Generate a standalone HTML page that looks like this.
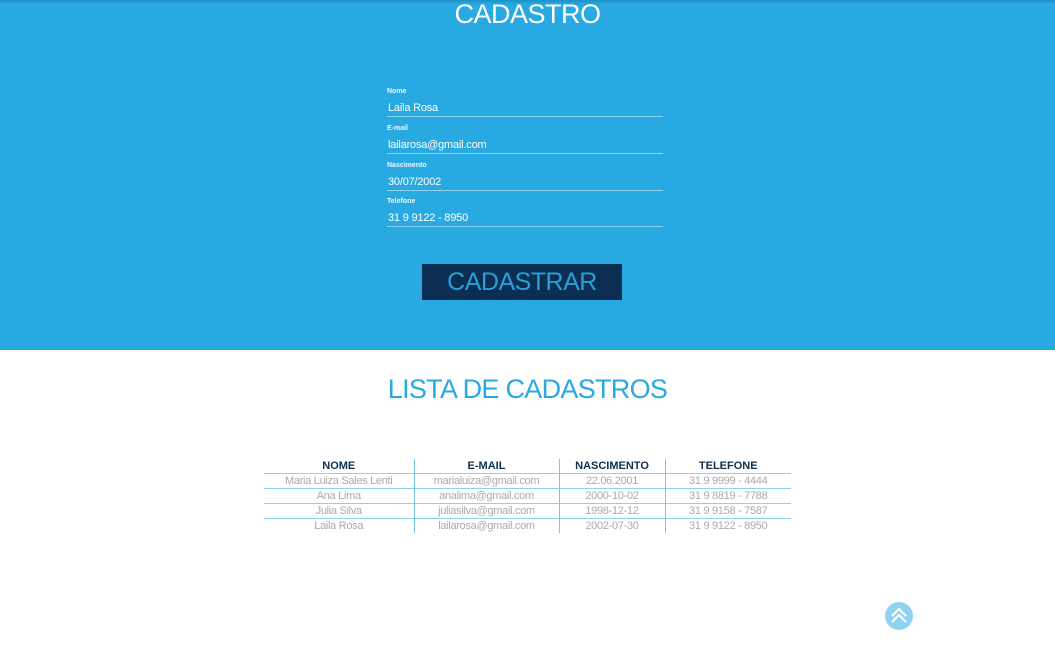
<!DOCTYPE html>
<html><head><style>
*{margin:0;padding:0;box-sizing:border-box}
body{width:1055px;height:656px;overflow:hidden;background:#fff;font-family:"Liberation Sans",sans-serif;position:relative}
.top{position:absolute;left:0;top:0;width:1055px;height:350px;background:#29a9e1}
.shadow{position:absolute;left:0;top:0;width:1055px;height:4px;background:linear-gradient(#1e8fc3,#29a9e1)}
h1{position:absolute;top:-1px;left:0;width:1055px;text-align:center;color:#fff;font-weight:normal;font-size:27px;letter-spacing:-0.5px}
.f{position:absolute;left:387px;width:276px;border-bottom:1px solid #8ed3f2}
.f .l{font-size:7px;font-weight:bold;color:#f0f8ff;height:14px}
.f .v{font-size:11px;color:#fff;height:14px;line-height:12px;padding-left:1px;letter-spacing:-0.2px}
.btn{position:absolute;left:422px;top:264px;width:200px;height:36px;background:#0b2e52;color:#2a9fd8;font-size:25px;text-align:center;line-height:37px;letter-spacing:-0.5px}
h2{position:absolute;top:374px;left:0;width:1055px;text-align:center;color:#29a9e1;font-weight:normal;font-size:27px;letter-spacing:-0.7px}
table{position:absolute;left:264px;top:459px;width:527px;border-collapse:collapse;font-size:11px}
td,th{text-align:center;height:14.5px;padding:0;line-height:14px}
th{color:#10304f;font-size:11px}
td{color:#aaa;letter-spacing:-0.3px}
tr.b td,tr.b th{border-bottom:1px solid #8fd0ef}
td+td,th+th{border-left:1px solid #7cc6ea}
.up{position:absolute;left:885px;top:602px;width:28px;height:28px;border-radius:50%;background:#8fd3f1}
</style></head><body>
<div class="top"></div><div class="shadow"></div>
<h1>CADASTRO</h1>
<div class="f" style="top:88px"><div class="l">Nome</div><div class="v">Laila Rosa</div></div>
<div class="f" style="top:125px"><div class="l">E-mail</div><div class="v">lailarosa@gmail.com</div></div>
<div class="f" style="top:162px"><div class="l">Nascimento</div><div class="v">30/07/2002</div></div>
<div class="f" style="top:198px"><div class="l">Telefone</div><div class="v">31 9 9122 - 8950</div></div>
<div class="btn">CADASTRAR</div>
<h2>LISTA DE CADASTROS</h2>
<table>
<colgroup><col style="width:150px"><col style="width:145px"><col style="width:106px"><col style="width:126px"></colgroup>
<tr class="b"><th>NOME</th><th>E-MAIL</th><th>NASCIMENTO</th><th>TELEFONE</th></tr>
<tr class="b"><td>Maria Luiza Sales Lenti</td><td>marialuiza@gmail.com</td><td>22.06.2001</td><td>31 9 9999 - 4444</td></tr>
<tr class="b"><td>Ana Lima</td><td>analima@gmail.com</td><td>2000-10-02</td><td>31 9 8819 - 7788</td></tr>
<tr class="b"><td>Julia Silva</td><td>juliasilva@gmail.com</td><td>1998-12-12</td><td>31 9 9158 - 7587</td></tr>
<tr><td>Laila Rosa</td><td>lailarosa@gmail.com</td><td>2002-07-30</td><td>31 9 9122 - 8950</td></tr>
</table>
<div class="up"><svg width="28" height="28" viewBox="0 0 28 28"><path d="M7 14 L14 7 L21 14 M7 20 L14 13 L21 20" fill="none" stroke="#fff" stroke-width="2"/></svg></div>
</body></html>
